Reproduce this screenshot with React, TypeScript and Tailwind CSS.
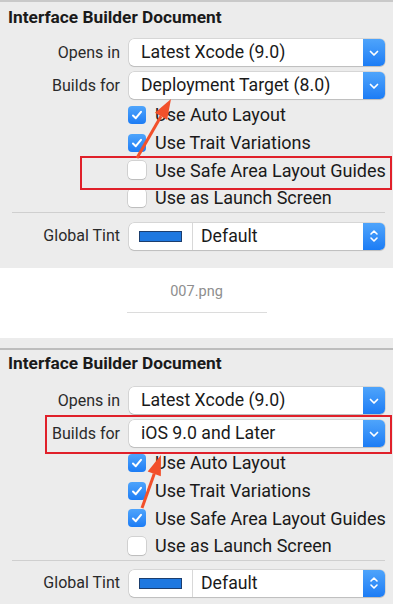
import React from "react";

const font = { fontFamily: "Roboto, 'Noto Sans', sans-serif" };

const Chevron = ({ double }: { double?: boolean }) =>
  double ? (
    <svg width="10" height="16" viewBox="0 0 10 16" fill="none" stroke="white" strokeWidth="1.6" strokeLinecap="round" strokeLinejoin="round">
      <path d="M2 6 L5 3 L8 6" />
      <path d="M2 10 L5 13 L8 10" />
    </svg>
  ) : (
    <svg width="10" height="8" viewBox="0 0 10 8" fill="none" stroke="white" strokeWidth="1.7" strokeLinecap="round" strokeLinejoin="round">
      <path d="M1.5 2.5 L5 6 L8.5 2.5" />
    </svg>
  );

const Popup = ({ value, tint }: { value: string; tint?: boolean }) => (
  <div className="flex h-[27px] w-[256px] items-stretch rounded-[5px] bg-white shadow-[0_0_0_0.5px_rgba(0,0,0,0.18),0_1px_1px_rgba(0,0,0,0.12)]">
    {tint && (
      <div className="flex w-[64px] items-center justify-center border-r border-[#d8d8d8]">
        <div className="h-[11px] w-[43px] border border-[#1c3e6e] bg-[#1e78e0]" />
      </div>
    )}
    <div className={`flex flex-1 items-center text-[17.7px] text-[#1a1a1a] ${tint ? "pl-[8px]" : "pl-[12px]"}`}>{value}</div>
    <div className="flex w-[22px] items-center justify-center rounded-r-[5px] bg-gradient-to-b from-[#4ea4fb] to-[#1b7cf5]">
      <Chevron double={tint} />
    </div>
  </div>
);

const Check = ({ on, label }: { on: boolean; label: string }) => (
  <div className="flex h-[27.7px] items-center">
    {on ? (
      <div className="flex h-[18px] w-[18px] items-center justify-center rounded-[4px] bg-gradient-to-b from-[#4ea4fb] to-[#1b7cf5]">
        <svg width="12" height="12" viewBox="0 0 12 12" fill="none" stroke="white" strokeWidth="2" strokeLinecap="round" strokeLinejoin="round">
          <path d="M2 6.5 L4.8 9.2 L10 2.8" />
        </svg>
      </div>
    ) : (
      <div className="h-[18px] w-[18px] rounded-[4px] bg-white shadow-[0_0_0_0.5px_rgba(0,0,0,0.22),0_1px_1px_rgba(0,0,0,0.1)]" />
    )}
    <span className="ml-[9px] text-[18px] text-[#1a1a1a]">{label}</span>
  </div>
);

const Row = ({ label, children }: { label: string; children: React.ReactNode }) => (
  <div className="flex items-center">
    <div className="w-[120px] text-right text-[16px] text-[#2a2a2a]">{label}</div>
    <div className="ml-[9px]">{children}</div>
  </div>
);

const Panel = ({ builds, safe, rowsTop, tintTop }: { builds: string; safe: boolean; rowsTop: string; tintTop: string }) => (
  <div className="bg-[#ececec]">
    <div className="pl-[8px] text-[17.3px] font-bold leading-[22px] text-[#1a1a1a]">Interface Builder Document</div>
    <div className={`flex flex-col gap-[6px] ${rowsTop}`}>
      <Row label="Opens in">
        <Popup value="Latest Xcode (9.0)" />
      </Row>
      <Row label="Builds for">
        <Popup value={builds} />
      </Row>
    </div>
    <div className="ml-[128px] mt-[2px] flex flex-col">
      <Check on label="Use Auto Layout" />
      <Check on label="Use Trait Variations" />
      <Check on={safe} label="Use Safe Area Layout Guides" />
      <Check on={false} label="Use as Launch Screen" />
    </div>
    <div className="ml-[12px] mr-[8px] h-px bg-[#cfcfcf]" />
    <div className={tintTop}>
      <Row label="Global Tint">
        <Popup value="Default" tint />
      </Row>
    </div>
  </div>
);

const Arrow = ({ x1, y1, x2, y2 }: { x1: number; y1: number; x2: number; y2: number }) => {
  const ang = Math.atan2(y2 - y1, x2 - x1);
  const len = 20;
  const w = 7;
  const bx = x2 - len * Math.cos(ang);
  const by = y2 - len * Math.sin(ang);
  const px = -Math.sin(ang) * w;
  const py = Math.cos(ang) * w;
  return (
    <g>
      <line x1={x1} y1={y1} x2={bx} y2={by} stroke="#f2502b" strokeWidth="3" />
      <polygon points={`${x2},${y2} ${bx + px},${by + py} ${bx - px},${by - py}`} fill="#f2502b" />
    </g>
  );
};

export default function App() {
  return (
    <div className="relative h-[604px] w-[393px] overflow-hidden bg-white" style={font}>
      <div className="h-[268px] border-t-2 border-[#c9c9c9] bg-[#ececec] pt-[4px]">
        <Panel builds="Deployment Target (8.0)" safe={false} rowsTop="mt-[11px]" tintTop="mt-[10px]" />
      </div>
      <div className="flex h-[70px] flex-col items-center pt-[13px]">
        <div className="text-[14.5px] text-[#8e8e8e]">007.png</div>
        <div className="mt-[9px] h-px w-[140px] bg-[#dcdcdc]" />
      </div>
      <div className="h-[266px] bg-[#ececec] pt-[10px]">
        <div className="h-[2px] bg-[#bdbdbd]" />
        <div className="pt-[2px]">
          <Panel builds="iOS 9.0 and Later" safe rowsTop="mt-[13px]" tintTop="mt-[9px]" />
        </div>
      </div>

      <div className="absolute left-[80px] top-[156px] h-[34px] w-[312px] border-2 border-[#e0202a]" />
      <div className="absolute left-[45px] top-[415px] h-[39px] w-[347px] border-2 border-[#e0202a]" />
      <svg className="absolute left-0 top-0" width="393" height="604">
        <Arrow x1={137} y1={158} x2={171} y2={99} />
        <Arrow x1={142} y1={508} x2={161} y2={455} />
      </svg>
    </div>
  );
}
